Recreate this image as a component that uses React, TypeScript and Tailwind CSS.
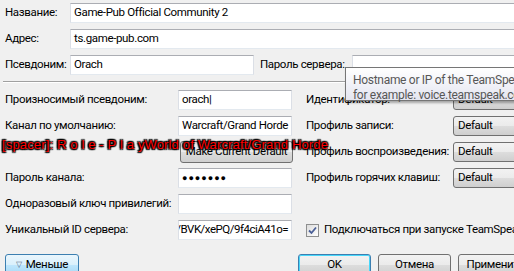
import type { ReactNode } from "react";

const inputCls =
  "h-[20px] bg-white border border-[#dbdfe6] border-t-[#abadb3] border-b-[#e3e9ef] px-[3px] flex items-center whitespace-nowrap overflow-hidden";

function TextBox({ value, className = "", focused = false }: { value?: string; className?: string; focused?: boolean }) {
  return (
    <div
      className={`${inputCls} ${className} ${focused ? "border-[#b5cfe7] border-t-[#3d7bad]" : ""}`}
    >
      {value}
    </div>
  );
}

function Combo({ value }: { value: string }) {
  return (
    <div className="h-[20px] w-[120px] rounded-[3px] border border-[#707070] bg-[linear-gradient(#f2f2f2_0%,#ebebeb_50%,#dddddd_50%,#cfcfcf_100%)] px-[4px] flex items-center">
      {value}
    </div>
  );
}

function WinButton({
  children,
  className = "",
  variant = "normal",
}: {
  children: ReactNode;
  className?: string;
  variant?: "normal" | "default" | "hover";
}) {
  const look =
    variant === "hover"
      ? "border-[#3c7fb1] bg-[linear-gradient(#eaf6fd_0%,#d9f0fc_50%,#bee6fd_50%,#a7d9f5_100%)]"
      : variant === "default"
        ? "border-[#3c7fb1] shadow-[inset_0_0_0_1px_#48d7fa] bg-[linear-gradient(#f2f2f2_0%,#ebebeb_50%,#dddddd_50%,#cfcfcf_100%)]"
        : "border-[#707070] bg-[linear-gradient(#f2f2f2_0%,#ebebeb_50%,#dddddd_50%,#cfcfcf_100%)]";
  return (
    <div className={`h-[22px] rounded-[3px] border flex items-center justify-center ${look} ${className}`}>
      {children}
    </div>
  );
}

function Label({ children, className = "" }: { children?: ReactNode; className?: string }) {
  return <div className={`shrink-0 whitespace-nowrap ${className}`}>{children}</div>;
}

export default function App() {
  return (
    <div className="relative w-[514px] h-[271px] overflow-hidden bg-[#f0f0f0] text-[11.5px] leading-none text-black font-['Roboto',sans-serif] tracking-[-0.35px]">
      <div className="w-[640px] pt-[3px]">
        {/* connection */}
        <div className="flex flex-col gap-[6px] pl-[5px]">
          <div className="flex items-center">
            <Label className="w-[65px]">Название:</Label>
            <TextBox className="flex-1" value="Game-Pub Official Community 2" />
          </div>
          <div className="flex items-center">
            <Label className="w-[65px]">Адрес:</Label>
            <TextBox className="flex-1" value="ts.game-pub.com" focused />
          </div>
          <div className="flex items-center">
            <Label className="w-[65px]">Псевдоним:</Label>
            <TextBox className="w-[184px]" value="Orach" />
            <Label className="ml-[6px] w-[92px]">Пароль сервера:</Label>
            <TextBox className="flex-1" />
          </div>
        </div>

        <div className="mt-[6px] ml-[3px] border-t border-t-[#a0a0a0] border-b border-b-white" />

        {/* extended */}
        <div className="mt-[7px] flex">
          <div className="flex flex-col gap-[6px] pl-[5px]">
            <div className="flex items-center">
              <Label className="w-[173px]">Произносимый псевдоним:</Label>
              <TextBox className="w-[114px]" value="orach|" />
            </div>
            <div className="flex items-center">
              <Label className="w-[173px]">Канал по умолчанию:</Label>
              <TextBox className="w-[114px]" value="Warcraft/Grand Horde" />
            </div>
            <div className="flex items-center h-[20px]">
              <Label className="w-[175px]" />
              <WinButton className="w-[113px] h-[18px]">Make Current Default</WinButton>
            </div>
            <div className="flex items-center">
              <Label className="w-[173px]">Пароль канала:</Label>
              <TextBox className="w-[114px] text-[9px] tracking-[1px]" value="●●●●●●●" />
            </div>
            <div className="flex items-center">
              <Label className="w-[173px]">Одноразовый ключ привилегий:</Label>
              <TextBox className="w-[114px]" />
            </div>
            <div className="flex items-center">
              <Label className="w-[173px]">Уникальный ID сервера:</Label>
              <TextBox className="w-[114px] px-[1px] justify-end tracking-[-0.5px]" value="/BVK/xePQ/9f4ciA41o=" />
            </div>
          </div>

          <div className="ml-[11px] flex flex-col gap-[6px]">
            <div className="flex items-center">
              <Label className="w-[149px] pl-[2px]">Идентификатор:</Label>
              <Combo value="Default" />
            </div>
            <div className="flex items-center">
              <Label className="w-[149px] pl-[2px]">Профиль записи:</Label>
              <Combo value="Default" />
            </div>
            <div className="flex items-center">
              <Label className="w-[149px] pl-[2px]">Профиль воспроизведения:</Label>
              <Combo value="Default" />
            </div>
            <div className="flex items-center">
              <Label className="w-[149px] pl-[2px]">Профиль горячих клавиш:</Label>
              <Combo value="Default" />
            </div>
            <div className="h-[20px]" />
            <div className="flex items-center h-[20px]">
              <div className="ml-[2px] w-[13px] h-[13px] border border-[#8e8f8f] bg-[linear-gradient(135deg,#dcdcdc,#ffffff)] flex items-center justify-center">
                <svg width="9" height="9" viewBox="0 0 9 9">
                  <path d="M1 4.5 L3.5 7 L8 1.5" fill="none" stroke="#4a5f97" strokeWidth="1.8" />
                </svg>
              </div>
              <Label className="ml-[5px]">Подключаться при запуске TeamSpeak</Label>
            </div>
          </div>
        </div>

        {/* buttons */}
        <div className="mt-[14px] flex pl-[5px]">
          <WinButton className="w-[74px]" variant="hover">
            <span className="mr-[4px] text-[8px] text-[#5a6f8a]">▽</span>Меньше
          </WinButton>
          <WinButton className="ml-[219px] w-[73px]" variant="default">
            OK
          </WinButton>
          <WinButton className="ml-[7px] w-[73px]">Отмена</WinButton>
          <WinButton className="ml-[7px] w-[75px]">Применить</WinButton>
        </div>
      </div>

      {/* tooltip */}
      <div className="absolute left-[345px] top-[67px] w-[220px] h-[34px] border border-[#767676] bg-[linear-gradient(#ffffff,#e4e5f0)] shadow-[1px_2px_2px_rgba(0,0,0,0.3)] pl-[7px] pt-[5px] text-[12px] tracking-[-0.3px] text-[#575757] leading-[15px] whitespace-nowrap">
        <div>Hostname or IP of the TeamSpeak 3 server</div>
        <div>for example: voice.teamspeak.com</div>
      </div>

      {/* overlay notification */}
      <div className="absolute left-[2px] top-[138px] whitespace-nowrap font-['Liberation_Sans',sans-serif] text-[13px] leading-none tracking-[0.15px] text-[#ff0000] [text-shadow:0_0_2px_#000,0_0_2px_#000,1px_1px_1px_#000,-1px_-1px_1px_#000,1px_-1px_1px_#000,-1px_1px_1px_#000]">
        [spacer]: R o l e - P l a yWorld of Warcraft/Grand Horde
      </div>
    </div>
  );
}
